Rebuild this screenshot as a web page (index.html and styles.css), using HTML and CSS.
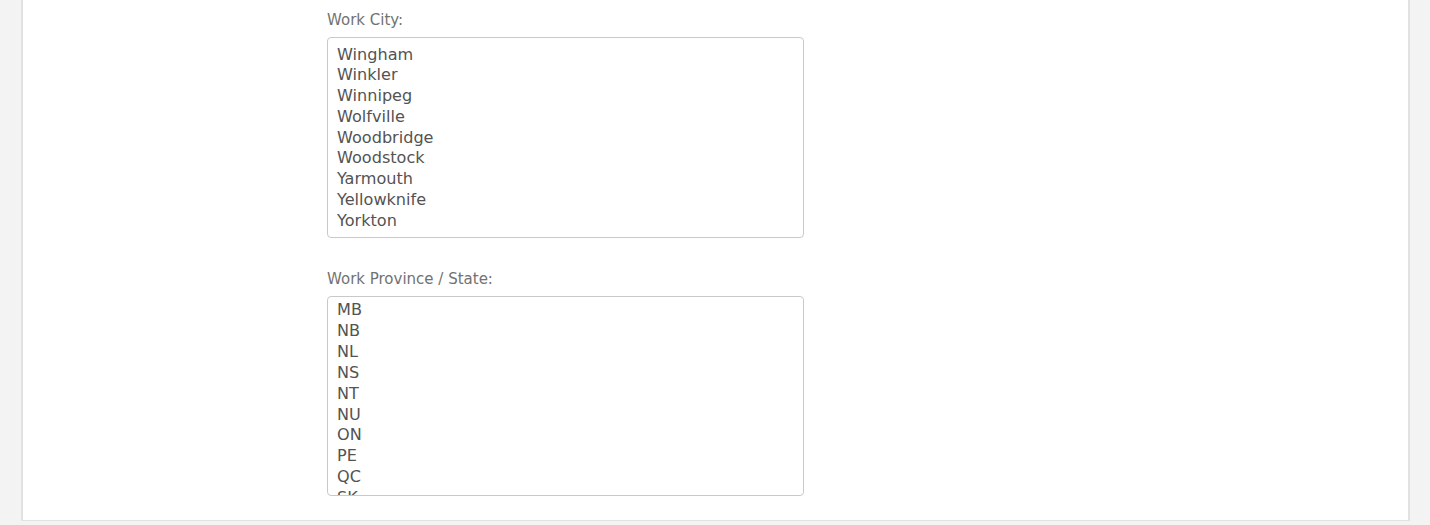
FILE: index.html
```html
<!DOCTYPE html>
<html lang="en">
<head>
<meta charset="utf-8">
<title>Work location</title>
<link rel="stylesheet" href="styles.css">
</head>
<body>
<div class="panel">
  <div class="form">
    <div class="field">
      <label class="label" for="city">Work City:</label>
      <ul class="listbox listbox-city" id="city" role="listbox" aria-multiselectable="true">
        <li role="option">Wingham</li>
        <li role="option">Winkler</li>
        <li role="option">Winnipeg</li>
        <li role="option">Wolfville</li>
        <li role="option">Woodbridge</li>
        <li role="option">Woodstock</li>
        <li role="option">Yarmouth</li>
        <li role="option">Yellowknife</li>
        <li role="option">Yorkton</li>
      </ul>
    </div>
    <div class="field">
      <label class="label" for="province">Work Province / State:</label>
      <ul class="listbox listbox-prov" id="province" role="listbox" aria-multiselectable="true">
        <li role="option">MB</li>
        <li role="option">NB</li>
        <li role="option">NL</li>
        <li role="option">NS</li>
        <li role="option">NT</li>
        <li role="option">NU</li>
        <li role="option">ON</li>
        <li role="option">PE</li>
        <li role="option">QC</li>
        <li role="option">SK</li>
      </ul>
    </div>
  </div>
</div>
</body>
</html>
```

FILE: styles.css
```css
html, body {
  margin: 0;
  padding: 0;
}

body {
  background: #f3f3f3;
  font-family: "DejaVu Sans", sans-serif;
  height: 525px;
  overflow: hidden;
}

.panel {
  margin-left: 21px;
  width: 1389px;
  height: 521px;
  background: #ffffff;
  border-left: 2px solid #e2e2e2;
  border-right: 2px solid #e2e2e2;
  border-bottom: 1px solid #e2e2e2;
  box-sizing: border-box;
  padding-left: 304px;
  padding-top: 10px;
}

.form {
  width: 477px;
  display: flex;
  flex-direction: column;
  gap: 31px;
}

.field {
  display: flex;
  flex-direction: column;
}

.label {
  font-family: "DejaVu Sans", sans-serif;
  font-size: 15px;
  line-height: 20px;
  color: #727272;
  margin-bottom: 7px;
}

.listbox {
  list-style: none;
  margin: 0;
  height: 201px;
  box-sizing: border-box;
  border: 1px solid #c9c9c9;
  border-radius: 4px;
  overflow: hidden;
  padding: 0 9px;
  font-family: "DejaVu Sans", sans-serif;
  font-size: 16.1px;
  color: #535353;
}

.listbox li {
  height: 20.75px;
  line-height: 20.75px;
  white-space: nowrap;
}

.listbox-city {
  padding-top: 6.5px;
}

.listbox-prov {
  height: 200px;
  padding-top: 3.3px;
}

.listbox-prov li {
  height: 20.85px;
  line-height: 20.85px;
}
```
